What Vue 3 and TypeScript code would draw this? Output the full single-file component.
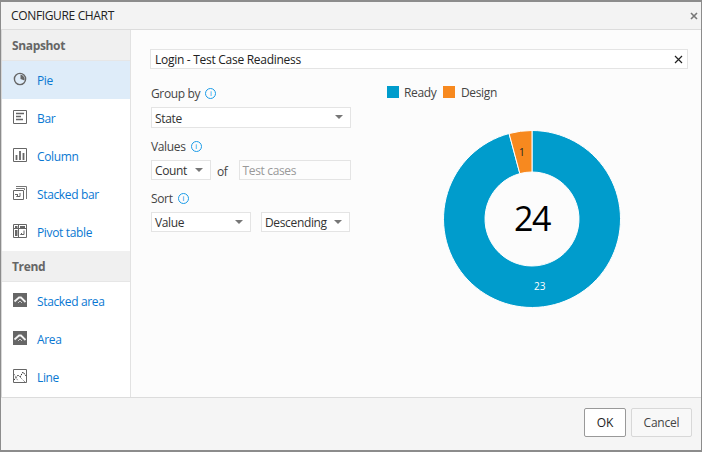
<template>
  <div class="dialog">
    <header class="title-bar">
      <h1>CONFIGURE CHART</h1>
      <svg class="close" width="8" height="8" viewBox="0 0 8 8"><path d="M1 1l6 6M7 1L1 7" /></svg>
    </header>

    <div class="body">
      <nav class="sidebar">
        <template v-for="group in groups" :key="group.name">
          <div class="group-title">{{ group.name }}</div>
          <a
            v-for="item in group.items"
            :key="item.label"
            class="nav-item"
            :class="{ selected: item.label === 'Pie' }"
          >
            <svg class="nav-icon" width="14" height="14" viewBox="0 0 14 14" v-html="icons[item.icon]" />
            <span>{{ item.label }}</span>
          </a>
        </template>
      </nav>

      <main class="content">
        <div class="title-input">
          <span>Login - Test Case Readiness</span>
          <svg width="9" height="9" viewBox="0 0 9 9"><path d="M1 1l7 7M8 1L1 8" /></svg>
        </div>

        <div class="columns">
          <form class="form" @submit.prevent>
            <label class="field-label">Group by <i class="info">i</i></label>
            <div class="select wide"><span>State</span><b class="arrow" /></div>

            <label class="field-label">Values <i class="info">i</i></label>
            <div class="row">
              <div class="select count"><span>Count</span><b class="arrow" /></div>
              <span class="of">of</span>
              <div class="text-field">Test cases</div>
            </div>

            <label class="field-label">Sort <i class="info">i</i></label>
            <div class="row sort-row">
              <div class="select value"><span>Value</span><b class="arrow" /></div>
              <div class="select direction"><span>Descending</span><b class="arrow" /></div>
            </div>
          </form>

          <section class="chart">
            <div class="legend">
              <span class="swatch ready" />
              <span class="legend-text">Ready</span>
              <span class="swatch design" />
              <span class="legend-text">Design</span>
            </div>
            <div class="donut">
              <svg width="180" height="180" viewBox="0 0 180 180">
                <path :d="readyPath" fill="#009ccc" stroke="#fff" stroke-width="1" />
                <path :d="designPath" fill="#f7891f" stroke="#fff" stroke-width="1" />
              </svg>
              <span class="total">24</span>
              <span class="slice-label slice-one">1</span>
              <span class="slice-label slice-big">23</span>
            </div>
          </section>
        </div>
      </main>
    </div>

    <footer class="footer">
      <button class="btn primary">OK</button>
      <button class="btn">Cancel</button>
    </footer>
  </div>
</template>

<script setup lang="ts">
type IconName = 'pie' | 'bar' | 'column' | 'stacked' | 'pivot' | 'area' | 'line'

const box = '<path d="M.5.5h13v13H.5z" fill="none" stroke="#666"/>'

const icons: Record<IconName, string> = {
  pie: '<circle cx="7" cy="7" r="5.6" fill="none" stroke="#666" stroke-width="1.4"/><path d="M7.500 2.500A5 5 0 0 1 11.500 8.500L7.500 7z" fill="#666"/>',
  bar: box + '<path d="M3 3.500h8M3 6.500h5M3 9.500h7" stroke="#666" stroke-width="1.500"/>',
  column: box + '<path d="M3.500 12V7M7 12V3M10.500 12V5" stroke="#666" stroke-width="1.800"/>',
  stacked: '<path d="M.5 4.500h10v9H.5z" fill="none" stroke="#666"/><path d="M3 .5h10.500V13M3 2.500h8.500V4" fill="none" stroke="#777"/><path d="M2 8.500h3M7 7v3.500H3.500M3.500 10.500l1.500-1.500" fill="none" stroke="#666"/>',
  pivot: box + '<path d="M1 4.500h12M5.500 1v12" stroke="#666"/><path d="M2 2h2.500v2H2zM7 2h5v2H7zM2 6h2.500v6H2z" fill="#666"/><path d="M11 6.500v4H7.500M7.500 10.500l1.500-1.500" stroke="#666" fill="none"/>',
  area: '<path d="M0 0h14v14H0z" fill="#666"/><path d="M1.500 8.500L6 4.500h2l4.500 4.500" fill="none" stroke="#f4f4f4" stroke-width="1.800"/><path d="M5 10l2-2 2 2" fill="none" stroke="#ccc"/>',
  line: box + '<path d="M1 11l4-5 2 2 3-5 3 4" fill="none" stroke="#333" stroke-dasharray="1.500 .8"/><path d="M1 5l4 7M7 8l5 5" fill="none" stroke="#666" stroke-dasharray="1 1"/>',
}

const groups: { name: string; items: { label: string; icon: IconName }[] }[] = [
  {
    name: 'Snapshot',
    items: [
      { label: 'Pie', icon: 'pie' },
      { label: 'Bar', icon: 'bar' },
      { label: 'Column', icon: 'column' },
      { label: 'Stacked bar', icon: 'stacked' },
      { label: 'Pivot table', icon: 'pivot' },
    ],
  },
  {
    name: 'Trend',
    items: [
      { label: 'Stacked area', icon: 'area' },
      { label: 'Area', icon: 'area' },
      { label: 'Line', icon: 'line' },
    ],
  },
]

// ring segment from angle a to b (degrees, clockwise from 12 o'clock)
function ring(a: number, b: number, outer = 88.5, inner = 47, c = 90): string {
  const pt = (r: number, deg: number) => {
    const t = (deg * Math.PI) / 180
    return `${(c + r * Math.sin(t)).toFixed(2)} ${(c - r * Math.cos(t)).toFixed(2)}`
  }
  const large = b - a > 180 ? 1 : 0
  return `M${pt(outer, a)}A${outer} ${outer} 0 ${large} 1 ${pt(outer, b)}L${pt(inner, b)}A${inner} ${inner} 0 ${large} 0 ${pt(inner, a)}Z`
}

const readyPath = ring(0, 345)
const designPath = ring(345, 360)
</script>

<style scoped>
.dialog {
  width: 702px;
  height: 452px;
  box-sizing: border-box;
  display: flex;
  flex-direction: column;
  border: 1px solid #8c8c8c;
  border-top-width: 2px;
  border-bottom-width: 2px;
  background: #f5f5f5;
  font-family: "Open Sans", sans-serif;
  font-size: 12px;
  letter-spacing: -0.35px;
  color: #333;
}

.title-bar {
  height: 27px;
  flex: none;
  display: flex;
  align-items: center;
  justify-content: space-between;
  padding: 0 3px 0 10px;
  background: #f3f3f3;
  border-bottom: 1px solid #dcdcdc;
}
.title-bar h1 {
  margin: 0;
  font-size: 12px;
  font-weight: 400;
  color: #222;
}
.close path {
  stroke: #777;
  stroke-width: 1.6;
}

.body {
  height: 367px;
  flex: none;
  display: flex;
  background: #fcfcfc;
  border-bottom: 1px solid #dcdcdc;
}

.sidebar {
  width: 128px;
  flex: none;
  background: #fff;
  border-right: 1px solid #e2e2e2;
  border-left: 1px solid #d8d8d8;
  display: flex;
  flex-direction: column;
}
.group-title {
  height: 30px;
  line-height: 32px;
  flex: none;
  padding-left: 10px;
  font-weight: 700;
  color: #666;
  background: #f0f0f0;
  border-bottom: 1px solid #e6e6e6;
}
.nav-item {
  height: 38px;
  flex: none;
  display: flex;
  align-items: center;
  gap: 10px;
  padding-left: 11px;
  color: #0a78d2;
}
.nav-item.selected {
  background: #deecf9;
}
.nav-icon {
  margin-top: -3px;
}

.content {
  flex: 1;
  min-width: 0;
  padding: 19px 13px 0 19px;
}
.title-input {
  height: 18px;
  display: flex;
  align-items: center;
  justify-content: space-between;
  padding: 0 4px;
  background: #fff;
  border: 1px solid #e4e4e4;
  color: #222;
  letter-spacing: -0.28px;
}
.title-input path {
  stroke: #222;
  stroke-width: 1.2;
}

.columns {
  display: flex;
  gap: 36px;
}

.form {
  width: 200px;
  flex: none;
  padding-left: 1px;
  padding-top: 15px;
}
.field-label {
  display: flex;
  align-items: center;
  gap: 5px;
  height: 18px;
  margin-bottom: 5px;
  color: #444;
}
.info {
  width: 9px;
  height: 9px;
  border: 1px solid #1a9be8;
  border-radius: 50%;
  display: inline-flex;
  align-items: center;
  justify-content: center;
  font-family: "Liberation Sans", sans-serif;
  font-size: 8px;
  font-style: normal;
  color: #1a9be8;
}

.select {
  height: 18px;
  display: flex;
  align-items: center;
  justify-content: space-between;
  padding: 1px 7px 0 3px;
  box-sizing: content-box;
  background: #fff;
  border: 1px solid #e4e4e4;
  color: #333;
}
.select .arrow {
  margin-top: -2px;
}
.select {
  height: 17px;
}
.wide {
  height: 18px;
  margin-bottom: 9px;
}
.arrow {
  width: 0;
  height: 0;
  border-left: 4px solid transparent;
  border-right: 4px solid transparent;
  border-top: 4px solid #777;
}

.row {
  display: flex;
  align-items: center;
  margin-bottom: 9px;
}
.count {
  width: 48px;
}
.of {
  margin: 2px 11px 0 6px;
  color: #444;
}
.text-field {
  flex: 1;
  height: 18px;
  line-height: 20px;
  padding-left: 3px;
  border: 1px solid #e4e4e4;
  color: #999;
  background: #fdfdfd;
}
.sort-row {
  gap: 10px;
}
.value {
  width: 88px;
}
.direction {
  flex: 1;
  margin-right: 1px;
}

.chart {
  flex: 1;
  padding-top: 16px;
}
.legend {
  display: flex;
  align-items: center;
  height: 14px;
}
.swatch {
  width: 12px;
  height: 12px;
  margin-right: 5px;
}
.swatch.ready { background: #009ccc; }
.swatch.design { background: #f7891f; margin-left: 6px; margin-right: 6px; }
.legend-text { color: #444; width: 33px; }

.donut {
  position: relative;
  width: 180px;
  height: 180px;
  margin: 30px 0 0 55px;
}
.donut svg {
  display: block;
}
.total {
  position: absolute;
  left: 0;
  right: 0;
  top: 66px;
  text-align: center;
  font-size: 34px;
  line-height: 46px;
  letter-spacing: -1.5px;
  color: #000;
}
.slice-label {
  position: absolute;
  font-size: 10px;
  line-height: 12px;
  letter-spacing: 0;
}
.slice-one { left: 77px; top: 17px; color: #222; }
.slice-big { left: 92px; top: 151px; color: #fff; }

.footer {
  flex: 1;
  display: flex;
  justify-content: flex-end;
  align-items: flex-start;
  gap: 5px;
  padding: 10px 9px 0 0;
}
.btn {
  height: 29px;
  padding: 0;
  font-family: inherit;
  font-size: 12px;
  letter-spacing: -0.2px;
  color: #444;
  background: #f8f8f8;
  border: 1px solid #d8d8d8;
  border-radius: 2px;
  width: 61px;
}
.btn.primary {
  width: 42px;
  background: #fff;
  border-color: #999;
  color: #222;
}
</style>
